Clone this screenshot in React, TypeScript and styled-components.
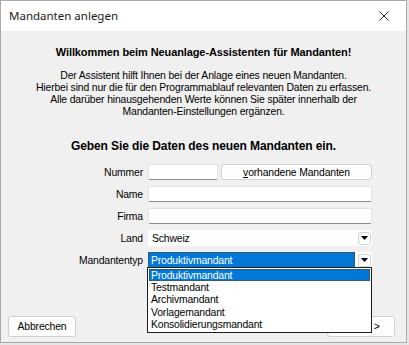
import React from 'react';
import styled, { createGlobalStyle } from 'styled-components';

const GlobalStyle = createGlobalStyle`
  html, body {
    margin: 0;
    padding: 0;
    background: #e6e6e6;
  }
  body {
    font-family: "Liberation Sans", Arial, sans-serif;
    font-size: 11px;
    color: #000;
  }
`;

const Window = styled.div`
  width: 405px;
  height: 341px;
  border: 1px solid #a9a9a9;
  background: #f0f0f0;
  display: flex;
  flex-direction: column;
  position: relative;
`;

const TitleBar = styled.div`
  height: 30px;
  background: #fff;
  display: flex;
  align-items: center;
  justify-content: space-between;
  padding: 0 17px 0 8px;
  flex-shrink: 0;
`;

const TitleText = styled.span`
  font-family: "Noto Sans", "Open Sans", sans-serif;
  font-size: 11.5px;
  color: #1a1a1a;
  margin-top: -1px;
`;

const Body = styled.div`
  flex: 1;
  display: flex;
  flex-direction: column;
  align-items: center;
  padding-top: 15px;
`;

const Heading = styled.h1<{ $size: number }>`
  margin: 0;
  font-size: ${({ $size }) => $size}px;
  font-weight: bold;
  line-height: 13px;
  text-align: center;
  letter-spacing: -0.1px;
`;

const Intro = styled.p`
  margin: 11px 0 22px;
  text-align: center;
  line-height: 12px;
  font-size: 10.4px;
  letter-spacing: -0.15px;
`;

const Form = styled.div`
  align-self: stretch;
  display: grid;
  grid-template-columns: 142px 224px;
  column-gap: 5px;
  row-gap: 6px;
  align-items: center;
  margin-top: 11px;
`;

const Label = styled.label`
  text-align: right;
  font-size: 10.4px;
  letter-spacing: -0.15px;
`;

const FieldRow = styled.div`
  display: flex;
  gap: 3px;
  height: 16px;
  position: relative;
`;

const TextInput = styled.div<{ $width?: number }>`
  box-sizing: border-box;
  height: 16px;
  width: ${({ $width }) => ($width ? `${$width}px` : '100%')};
  background: #fff;
  border: 1px solid #e2e2e2;
  border-bottom: 1px solid #8d8d8d;
  border-radius: 2px;
`;

const SmallButton = styled.div`
  box-sizing: border-box;
  flex: 1;
  height: 16px;
  background: #fdfdfd;
  border: 1px solid #d0d0d0;
  border-radius: 3px;
  display: flex;
  align-items: center;
  justify-content: center;
  font-size: 10.4px;
  letter-spacing: -0.15px;

  u {
    text-decoration: underline;
  }
`;

const ComboField = styled.div<{ $selected?: boolean }>`
  box-sizing: border-box;
  flex: 1;
  height: 16px;
  display: flex;
  align-items: center;
  padding-left: ${({ $selected }) => ($selected ? '2px' : '3px')};
  background: ${({ $selected }) => ($selected ? '#0078d7' : '#fff')};
  color: ${({ $selected }) => ($selected ? '#fff' : '#000')};
  border: ${({ $selected }) => ($selected ? '1px dotted #6b3a10' : '1px solid #ffffff')};
  font-size: 10.4px;
  letter-spacing: -0.15px;
  margin-right: ${({ $selected }) => ($selected ? '1px' : '0')};
`;

const ComboWrap = styled.div<{ $plain?: boolean }>`
  box-sizing: border-box;
  display: flex;
  align-items: center;
  gap: 2px;
  height: 16px;
  width: 100%;
  background: ${({ $plain }) => ($plain ? '#fff' : 'transparent')};
  border-radius: 2px;
  position: relative;
`;

const ArrowButton = styled.div`
  box-sizing: border-box;
  width: 13px;
  height: 13px;
  margin-right: 1px;
  background: #fff;
  border: 1px solid #d4d4d4;
  border-radius: 3px;
  display: flex;
  align-items: center;
  justify-content: center;
  flex-shrink: 0;
`;

const DropList = styled.ul`
  position: absolute;
  top: 15px;
  left: -1px;
  width: 225px;
  box-sizing: border-box;
  margin: 0;
  padding: 1px 0 2px;
  list-style: none;
  background: #fff;
  border: 1px solid #1e1e1e;
  z-index: 5;
`;

const DropItem = styled.li<{ $active?: boolean }>`
  height: 12.2px;
  line-height: 11px;
  box-sizing: border-box;
  padding-left: 1px;
  font-size: 10.4px;
  letter-spacing: -0.15px;
  background: ${({ $active }) => ($active ? '#0078d7' : 'transparent')};
  color: ${({ $active }) => ($active ? '#fff' : '#000')};
  border: ${({ $active }) => ($active ? '1px dotted #6b3a10' : '1px solid transparent')};
  margin: 0 1px;
  white-space: nowrap;
`;

const Footer = styled.div`
  margin-top: auto;
  align-self: stretch;
  display: flex;
  justify-content: space-between;
  padding: 0 11px 5px 7px;
`;

const DialogButton = styled.div`
  box-sizing: border-box;
  width: 68px;
  height: 21px;
  background: #fdfdfd;
  border: 1px solid #d0d0d0;
  border-radius: 3px;
  display: flex;
  align-items: center;
  justify-content: center;
  font-size: 10.4px;
  letter-spacing: -0.15px;
`;

const CloseIcon = () => (
  <svg width="10" height="10" viewBox="0 0 10 10">
    <path d="M0.5 0.5 L9.5 9.5 M9.5 0.5 L0.5 9.5" stroke="#222" strokeWidth="1" />
  </svg>
);

const Arrow = () => (
  <svg width="7" height="4" viewBox="0 0 7 4">
    <path d="M0 0 H7 L3.5 4 Z" fill="#000" />
  </svg>
);

const typen = [
  'Produktivmandant',
  'Testmandant',
  'Archivmandant',
  'Vorlagemandant',
  'Konsolidierungsmandant',
];

const App: React.FC = () => {
  return (
    <>
      <GlobalStyle />
      <Window>
        <TitleBar>
          <TitleText>Mandanten anlegen</TitleText>
          <CloseIcon />
        </TitleBar>
        <Body>
          <Heading $size={11}>Willkommen beim Neuanlage-Assistenten für Mandanten!</Heading>
          <Intro>
            Der Assistent hilft Ihnen bei der Anlage eines neuen Mandanten.
            <br />
            Hierbei sind nur die für den Programmablauf relevanten Daten zu erfassen.
            <br />
            Alle darüber hinausgehenden Werte können Sie später innerhalb der
            <br />
            Mandanten-Einstellungen ergänzen.
          </Intro>
          <Heading $size={12}>Geben Sie die Daten des neuen Mandanten ein.</Heading>
          <Form>
            <Label>Nummer</Label>
            <FieldRow>
              <TextInput $width={70} />
              <SmallButton>
                <span>
                  <u>v</u>orhandene Mandanten
                </span>
              </SmallButton>
            </FieldRow>

            <Label>Name</Label>
            <FieldRow>
              <TextInput />
            </FieldRow>

            <Label>Firma</Label>
            <FieldRow>
              <TextInput />
            </FieldRow>

            <Label>Land</Label>
            <FieldRow>
              <ComboWrap $plain>
                <ComboField>Schweiz</ComboField>
                <ArrowButton>
                  <Arrow />
                </ArrowButton>
              </ComboWrap>
            </FieldRow>

            <Label>Mandantentyp</Label>
            <FieldRow>
              <ComboWrap $plain>
                <ComboField $selected>Produktivmandant</ComboField>
                <ArrowButton>
                  <Arrow />
                </ArrowButton>
                <DropList>
                  {typen.map((t, i) => (
                    <DropItem key={t} $active={i === 0}>
                      {t}
                    </DropItem>
                  ))}
                </DropList>
              </ComboWrap>
            </FieldRow>
          </Form>
          <Footer>
            <DialogButton>Abbrechen</DialogButton>
            <DialogButton>Weiter &gt;</DialogButton>
          </Footer>
        </Body>
      </Window>
    </>
  );
};

export default App;
